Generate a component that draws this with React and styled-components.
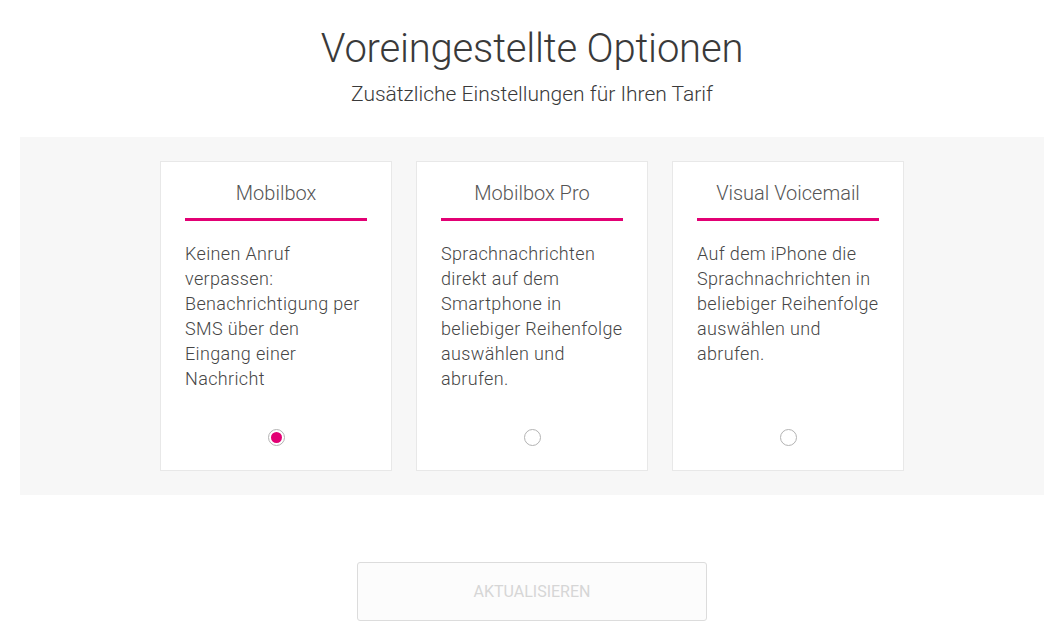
import React from "react";
import styled, { createGlobalStyle } from "styled-components";

const GlobalStyle = createGlobalStyle`
  html, body {
    margin: 0;
    padding: 0;
    background: #fff;
    font-family: Roboto, "Liberation Sans", sans-serif;
  }
`;

const options = [
  {
    id: "mobilbox",
    title: "Mobilbox",
    text: "Keinen Anruf verpassen: Benachrichtigung per SMS über den Eingang einer Nachricht",
  },
  {
    id: "mobilbox-pro",
    title: "Mobilbox Pro",
    text: "Sprachnachrichten direkt auf dem Smartphone in beliebiger Reihenfolge auswählen und abrufen.",
  },
  {
    id: "visual-voicemail",
    title: "Visual Voicemail",
    text: "Auf dem iPhone die Sprachnachrichten in beliebiger Reihenfolge auswählen und abrufen.",
  },
];

function App() {
  const [selected, setSelected] = React.useState("mobilbox");

  return (
    <Page>
      <GlobalStyle />
      <Header>
        <Title>Voreingestellte Optionen</Title>
        <Subtitle>Zusätzliche Einstellungen für Ihren Tarif</Subtitle>
      </Header>
      <Panel>
        {options.map((opt) => (
          <Card key={opt.id} onClick={() => setSelected(opt.id)}>
            <CardTitle>{opt.title}</CardTitle>
            <CardText>{opt.text}</CardText>
            <Radio $checked={selected === opt.id} />
          </Card>
        ))}
      </Panel>
      <Footer>
        <UpdateButton disabled>AKTUALISIEREN</UpdateButton>
      </Footer>
    </Page>
  );
}

export default App;

const Page = styled.div`
  width: 1059px;
  padding-top: 24px;
`;

const Header = styled.div`
  display: flex;
  flex-direction: column;
  align-items: center;
  margin-left: 5px;
`;

const Title = styled.h1`
  margin: 0;
  font-size: 40px;
  line-height: 50px;
  font-weight: 300;
  color: #3a3a3a;
  letter-spacing: -0.2px;
`;

const Subtitle = styled.p`
  margin: 8px 0 0;
  font-size: 21px;
  line-height: 24px;
  font-weight: 300;
  color: #3a3a3a;
`;

const Panel = styled.div`
  margin: 31px 15px 0 20px;
  height: 358px;
  background: #f7f7f7;
  display: flex;
  justify-content: center;
  align-items: flex-start;
  gap: 24px;
  padding-top: 24px;
  box-sizing: border-box;
`;

const Card = styled.div`
  width: 232px;
  height: 310px;
  box-sizing: border-box;
  background: #fff;
  border: 1px solid #e8e8e8;
  padding: 0 24px;
  display: flex;
  flex-direction: column;
  cursor: pointer;
`;

const CardTitle = styled.div`
  text-align: center;
  font-size: 20px;
  font-weight: 300;
  color: #555;
  padding: 19px 0 13px;
  border-bottom: 3px solid #e20074;
`;

const CardText = styled.p`
  margin: 20px 0 0;
  font-size: 18px;
  line-height: 25px;
  letter-spacing: 0.35px;
  color: #464646;
  font-weight: 300;
  flex: 1;
`;

const Radio = styled.span`
  align-self: center;
  width: 17px;
  height: 17px;
  box-sizing: border-box;
  border-radius: 50%;
  border: 1px solid #b3b3b3;
  margin-bottom: 24px;
  display: flex;
  align-items: center;
  justify-content: center;

  &::after {
    content: "";
    width: 11px;
    height: 11px;
    border-radius: 50%;
    background: ${(p) => (p.$checked ? "#e20074" : "transparent")};
  }
`;

const Footer = styled.div`
  display: flex;
  justify-content: center;
  padding: 67px 0 14px;
  margin-left: 5px;
`;

const UpdateButton = styled.button`
  width: 350px;
  height: 59px;
  background: #fcfcfc;
  border: 1px solid #dcdcdc;
  border-radius: 3px;
  font-family: Roboto, "Liberation Sans", sans-serif;
  font-size: 16px;
  font-weight: 400;
  color: #d6d6d6;
`;
